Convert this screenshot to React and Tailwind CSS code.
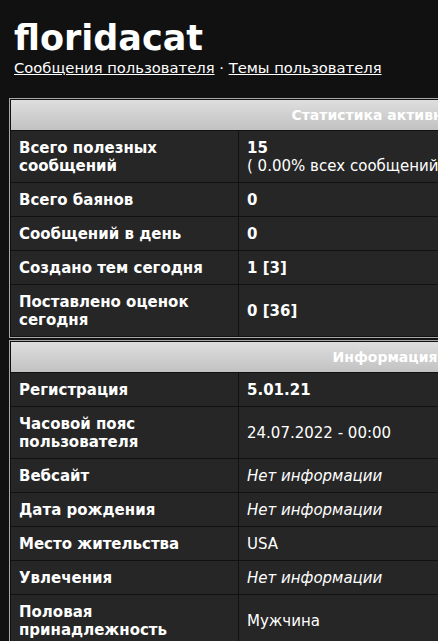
import React from 'react';

const stats = [
    { label: ['Всего полезных', 'сообщений'], value: <><b>15</b><br />( 0.00% всех сообщений)</> },
    { label: ['Всего баянов'], value: <b>0</b> },
    { label: ['Сообщений в день'], value: <b>0</b> },
    { label: ['Создано тем сегодня'], value: <b>1 [3]</b> },
    { label: ['Поставлено оценок', 'сегодня'], value: <b>0 [36]</b> },
];

const info = [
    { label: ['Регистрация'], value: <b>5.01.21</b> },
    { label: ['Часовой пояс', 'пользователя'], value: '24.07.2022 - 00:00' },
    { label: ['Вебсайт'], value: <i>Нет информации</i> },
    { label: ['Дата рождения'], value: <i>Нет информации</i> },
    { label: ['Место жительства'], value: 'USA' },
    { label: ['Увлечения'], value: <i>Нет информации</i> },
    { label: ['Половая', 'принадлежность'], value: 'Мужчина' },
];

function InfoTable({ title, rows, className = '' }) {
    return (
        <table className={`w-[752px] border-separate border-spacing-px bg-[#111] border border-[#a8a8a8] ${className}`}>
            <thead>
                <tr>
                    <th colSpan={2} className="h-[30px] p-0 text-center text-[14px] font-bold text-white bg-gradient-to-b from-[#dedede] to-[#c2c2c2]">
                        {title}
                    </th>
                </tr>
            </thead>
            <tbody>
                {rows.map((r, i) => (
                    <tr key={i}>
                        <td className="w-[227px] whitespace-nowrap bg-[#262626] px-2 pt-[8px] pb-[7px] align-middle font-bold">
                            {r.label.map((l, j) => <div key={j}>{l}</div>)}
                        </td>
                        <td className="whitespace-nowrap bg-[#262626] px-2 pt-[8px] pb-[7px] align-middle">{r.value}</td>
                    </tr>
                ))}
            </tbody>
        </table>
    );
}

export default function App() {
    return (
        <div className="min-h-screen w-full overflow-hidden bg-[#111] text-white text-[15px] leading-[18px] font-['DejaVu_Sans',Verdana,sans-serif]">
            <div className="px-[14px] pt-[17px]">
                <h1 className="text-[35px] leading-[42px] font-bold">floridacat</h1>
                <div className="text-[14.75px] leading-[18px]">
                    <a href="#" className="underline">Сообщения пользователя</a>
                    {' · '}
                    <a href="#" className="underline">Темы пользователя</a>
                </div>
            </div>
            <div className="pl-[9px] pt-[21px]">
                <InfoTable title="Статистика активности" rows={stats} />
                <InfoTable title="Информация" rows={info} className="mt-[2px]" />
            </div>
        </div>
    );
}
